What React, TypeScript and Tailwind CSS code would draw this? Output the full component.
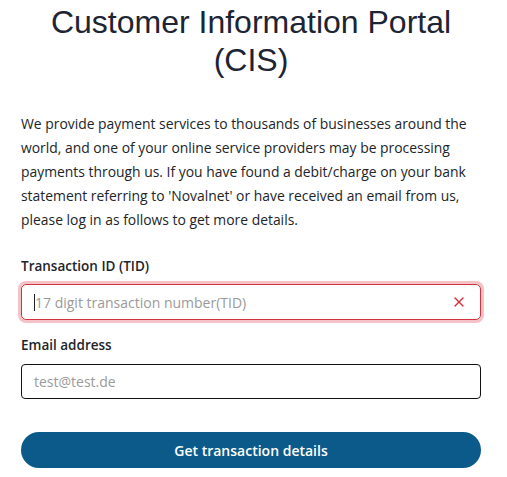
import { X } from 'lucide-react'

function Field({
	label,
	placeholder,
	invalid,
}: {
	label: string
	placeholder: string
	invalid?: boolean
}) {
	return (
		<div className="flex flex-col">
			<label className="text-[13.5px] font-semibold text-[#212529] leading-5">{label}</label>
			<div
				className={
					invalid
						? 'mt-[8px] h-[36px] flex items-center rounded-[5px] border border-[#d0343f] shadow-[0_0_0_3px_rgba(220,53,69,0.3)] pl-[12px] pr-[13px]'
						: 'mt-[9px] h-[35px] flex items-center rounded-[4px] border border-[#111] pl-[12px] pr-[13px]'
				}
			>
				{invalid && <span className="w-px h-[17px] bg-[#222]" aria-hidden="true" />}
				<span className="flex-1 text-[14px] text-[#9a9a9a]">{placeholder}</span>
				{invalid && <X className="size-[16px] text-[#d0343f]" strokeWidth={2} />}
			</div>
		</div>
	)
}

export default function App() {
	return (
		<div className="w-[507px] h-[477px] bg-white overflow-hidden">
			<div className="ml-[21px] w-[460px] font-['Open_Sans',sans-serif]">
				<h1 className="pt-[3px] text-center font-['Liberation_Sans',Arial,sans-serif] text-[32px] leading-[38px] text-[#1d2433]">
					Customer Information Portal
					<br />
					(CIS)
				</h1>
				<p className="mt-[33px] w-[470px] text-[13.9px] leading-[24px] text-[#212529]">
					We provide payment services to thousands of businesses around the world, and one of your
					online service providers may be processing payments through us. If you have found a
					debit/charge on your bank statement referring to 'Novalnet' or have received an email
					from us, please log in as follows to get more details.
				</p>
				<div className="mt-[24px] flex flex-col gap-[15px]">
					<Field label="Transaction ID (TID)" placeholder="17 digit transaction number(TID)" invalid />
					<Field label="Email address" placeholder="test@test.de" />
				</div>
				<button className="mt-[33px] w-full h-[36px] rounded-full bg-[#0b5a8a] text-white text-[14px] font-semibold">
					Get transaction details
				</button>
			</div>
		</div>
	)
}
